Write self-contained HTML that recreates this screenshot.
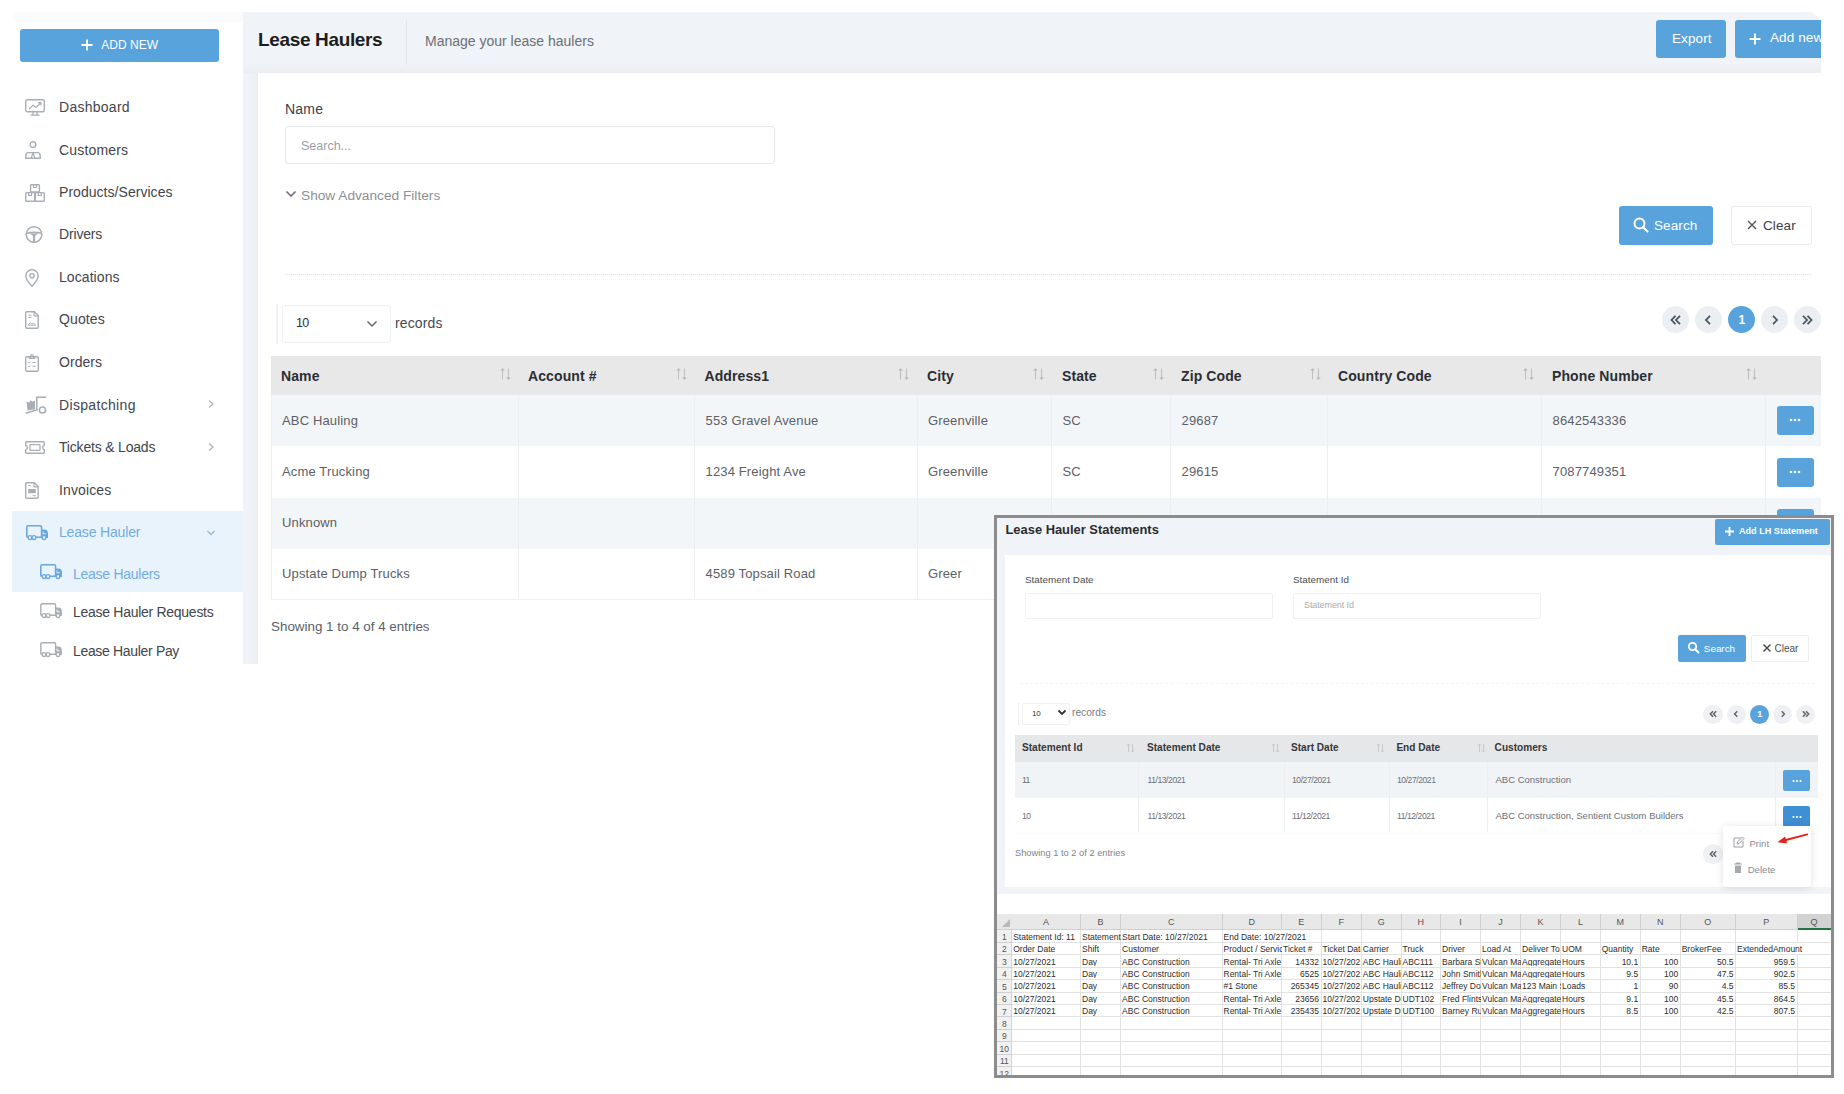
<!DOCTYPE html>
<html><head><meta charset="utf-8"><style>
html,body{margin:0;padding:0;background:#fff;}
body{width:1844px;height:1094px;position:relative;overflow:hidden;font-family:"Liberation Sans", sans-serif;}
.t{position:absolute;white-space:nowrap;}
.r{position:absolute;box-sizing:border-box;}
svg.r{overflow:visible;}
</style></head><body>
<div class="r" style="left:14px;top:12px;width:229px;height:10px;background:#fafbfc;"></div>
<div class="r" style="left:20px;top:29px;width:199px;height:33px;background:#58a3dc;border-radius:3px;"></div>
<svg class="r" style="left:80px;top:37px;" width="14" height="16" viewBox="0 0 14 16"><path d="M7 2.5V13.5M1.5 8H12.5" stroke="#fff" stroke-width="1.8"/></svg>
<div class="t" style="left:101.3px;top:39.04px;font-size:12px;line-height:12px;color:#fff;">ADD NEW</div>
<div class="t" style="left:59px;top:99.95px;font-size:14px;line-height:14px;color:#42454c;letter-spacing:0.27px;">Dashboard</div>
<div class="t" style="left:59px;top:142.55px;font-size:14px;line-height:14px;color:#42454c;letter-spacing:0.18px;">Customers</div>
<div class="t" style="left:59px;top:184.95px;font-size:14px;line-height:14px;color:#42454c;letter-spacing:0.04px;">Products/Services</div>
<div class="t" style="left:59px;top:227.45px;font-size:14px;line-height:14px;color:#42454c;letter-spacing:-0.16px;">Drivers</div>
<div class="t" style="left:59px;top:269.85px;font-size:14px;line-height:14px;color:#42454c;letter-spacing:0.07px;">Locations</div>
<div class="t" style="left:59px;top:312.45px;font-size:14px;line-height:14px;color:#42454c;letter-spacing:0.1px;">Quotes</div>
<div class="t" style="left:59px;top:354.95px;font-size:14px;line-height:14px;color:#42454c;letter-spacing:0.06px;">Orders</div>
<div class="t" style="left:59px;top:397.65px;font-size:14px;line-height:14px;color:#42454c;letter-spacing:0.33px;">Dispatching</div>
<div class="t" style="left:59px;top:439.95px;font-size:14px;line-height:14px;color:#42454c;letter-spacing:-0.19px;">Tickets &amp; Loads</div>
<div class="t" style="left:59px;top:482.55px;font-size:14px;line-height:14px;color:#42454c;letter-spacing:0.12px;">Invoices</div>
<svg class="r" style="left:25px;top:99px;" width="20" height="17" viewBox="0 0 20 17"><rect x="0.7" y="0.7" width="18.6" height="12" rx="1.5" fill="none" stroke="#a7aeb6" stroke-width="1.4"/><path d="M4 10L8 6.3L11 8.5L15.5 4" fill="none" stroke="#a7aeb6" stroke-width="1.2"/><path d="M12.8 3.6H15.9V6.6" fill="none" stroke="#a7aeb6" stroke-width="1.2"/><path d="M8 12.7V15.8M12 12.7V15.8M5.5 16.2H14.5" stroke="#a7aeb6" stroke-width="1.2"/></svg>
<svg class="r" style="left:25px;top:141px;" width="16" height="18" viewBox="0 0 16 18"><circle cx="8" cy="3.6" r="2.9" fill="none" stroke="#a7aeb6" stroke-width="1.4"/><path d="M0.8 17.2V14.6Q0.8 11.6 3.8 11.6H12.2Q15.2 11.6 15.2 14.6V17.2Z" fill="none" stroke="#a7aeb6" stroke-width="1.4"/><path d="M8 11.6L6.2 17.2M8 11.6L9.8 17.2" stroke="#a7aeb6" stroke-width="1.2"/></svg>
<svg class="r" style="left:25px;top:183.5px;" width="20" height="18" viewBox="0 0 20 18"><rect x="5.6" y="0.7" width="8.8" height="7.3" rx="0.8" fill="none" stroke="#a7aeb6" stroke-width="1.4"/><rect x="0.7" y="8.6" width="9" height="8.7" rx="0.8" fill="none" stroke="#a7aeb6" stroke-width="1.4"/><rect x="10.3" y="8.6" width="9" height="8.7" rx="0.8" fill="none" stroke="#a7aeb6" stroke-width="1.4"/><path d="M8.5 0.7V3.5H11.5V0.7M3.6 8.6V11.4H6.6V8.6M13.2 8.6V11.4H16.2V8.6" fill="none" stroke="#a7aeb6" stroke-width="1.1"/></svg>
<svg class="r" style="left:25px;top:226.4px;" width="18" height="17" viewBox="0 0 18 17"><circle cx="9" cy="8.5" r="7.8" fill="none" stroke="#a7aeb6" stroke-width="1.5"/><path d="M1.5 7.2Q9 5.5 16.5 7.2" fill="none" stroke="#a7aeb6" stroke-width="1.6"/><path d="M4.5 7.5L9 10.5L13.5 7.5Z" fill="#a7aeb6"/><path d="M9 9.5V16" stroke="#a7aeb6" stroke-width="2.2"/></svg>
<svg class="r" style="left:25px;top:268.5px;" width="14" height="18" viewBox="0 0 14 18"><path d="M7 17.2Q0.8 10.5 0.8 6.9A6.2 6.2 0 0 1 13.2 6.9Q13.2 10.5 7 17.2Z" fill="none" stroke="#a7aeb6" stroke-width="1.4"/><circle cx="7" cy="6.8" r="2.2" fill="none" stroke="#a7aeb6" stroke-width="1.3"/></svg>
<svg class="r" style="left:25px;top:311px;" width="14" height="18" viewBox="0 0 14 18"><path d="M1.8 0.7H9.3L13.2 4.6V16.2Q13.2 17.3 12.1 17.3H1.8Q0.7 17.3 0.7 16.2V1.8Q0.7 0.7 1.8 0.7Z" fill="none" stroke="#a7aeb6" stroke-width="1.4"/><path d="M9 0.9V4.9H13" fill="none" stroke="#a7aeb6" stroke-width="1.1"/><path d="M3.3 4.2H6.5M3.3 6.5H6.5M3.3 14.2L5.3 11.5L7 13.2L8.5 12L10.6 14.2Z" fill="none" stroke="#a7aeb6" stroke-width="1"/></svg>
<svg class="r" style="left:25px;top:353.5px;" width="14" height="18" viewBox="0 0 14 18"><rect x="0.7" y="2.7" width="12.6" height="14.6" rx="1.3" fill="none" stroke="#a7aeb6" stroke-width="1.4"/><path d="M4.3 4.3V2.6H5.6Q5.6 0.7 7 0.7Q8.4 0.7 8.4 2.6H9.7V4.3Z" fill="none" stroke="#a7aeb6" stroke-width="1.2"/><path d="M3 8.2L4 9.2L5.5 7.5M7.5 8.5H10.8M3 12.3H5.5M7.5 12.3H10.8" fill="none" stroke="#a7aeb6" stroke-width="1"/></svg>
<svg class="r" style="left:25px;top:396px;" width="22" height="18" viewBox="0 0 22 18"><path d="M0.8 17.2L13 13.5" stroke="#a7aeb6" stroke-width="1.5"/><path d="M1.5 5.5L4 6.5L5.5 4.2L7.5 5.5L10 4.8V13.2L2.5 14.5Z" fill="#a7aeb6"/><path d="M11.8 13V1.2H21.3" fill="none" stroke="#a7aeb6" stroke-width="1.5"/><circle cx="17.5" cy="14" r="3.1" fill="#fff" stroke="#a7aeb6" stroke-width="1.5"/></svg>
<svg class="r" style="left:25px;top:441px;" width="20" height="13" viewBox="0 0 20 13"><path d="M1.8 0.7H18.2Q19.3 0.7 19.3 1.8V4.3Q17.6 4.8 17.6 6.5Q17.6 8.2 19.3 8.7V11.2Q19.3 12.3 18.2 12.3H1.8Q0.7 12.3 0.7 11.2V8.7Q2.4 8.2 2.4 6.5Q2.4 4.8 0.7 4.3V1.8Q0.7 0.7 1.8 0.7Z" fill="none" stroke="#a7aeb6" stroke-width="1.4"/><rect x="5" y="3.6" width="10" height="5.8" rx="0.6" fill="none" stroke="#a7aeb6" stroke-width="1.3"/></svg>
<svg class="r" style="left:25px;top:481.5px;" width="14" height="17" viewBox="0 0 14 17"><path d="M1.8 0.7H9.3L13.2 4.6V15.2Q13.2 16.3 12.1 16.3H1.8Q0.7 16.3 0.7 15.2V1.8Q0.7 0.7 1.8 0.7Z" fill="none" stroke="#a7aeb6" stroke-width="1.4"/><path d="M9 0.9V4.9H13" fill="none" stroke="#a7aeb6" stroke-width="1.1"/><rect x="3.2" y="7" width="7.6" height="4.2" fill="#a7aeb6"/><path d="M3.3 3.5H5.8M7.5 13.7H10.8" stroke="#a7aeb6" stroke-width="1"/></svg>
<svg class="r" style="left:207px;top:399px;" width="8" height="10" viewBox="0 0 8 10"><path d="M2 1.5L6 5L2 8.5" fill="none" stroke="#b4b8bc" stroke-width="1.4"/></svg>
<svg class="r" style="left:207px;top:441.6px;" width="8" height="10" viewBox="0 0 8 10"><path d="M2 1.5L6 5L2 8.5" fill="none" stroke="#b4b8bc" stroke-width="1.4"/></svg>
<div class="r" style="left:12px;top:511px;width:231px;height:81px;background:#e9f3fc;"></div>
<svg class="r" style="left:25.5px;top:524.5px;" width="22" height="15" viewBox="0 0 22 15"><path d="M2.2 0.8H14.2Q15.6 0.8 15.6 2.2V12.3H2.2Q0.8 12.3 0.8 10.9V2.2Q0.8 0.8 2.2 0.8Z" fill="none" stroke="#6aa7dc" stroke-width="1.6"/><path d="M15.6 5.2H18.5Q21.2 5.2 21.2 8.8V12.3H15.6" fill="#6aa7dc" stroke="#6aa7dc" stroke-width="1.6"/><circle cx="4" cy="12.6" r="1.9" fill="#e9f3fc" stroke="#6aa7dc" stroke-width="1.3"/><circle cx="8" cy="12.6" r="1.9" fill="#e9f3fc" stroke="#6aa7dc" stroke-width="1.3"/><circle cx="18" cy="12.6" r="1.9" fill="#e9f3fc" stroke="#6aa7dc" stroke-width="1.3"/><path d="M17 6.5V8.8H19.8" fill="none" stroke="#e9f3fc" stroke-width="0.9"/></svg>
<div class="t" style="left:59px;top:525.15px;font-size:14px;line-height:14px;color:#74ace0;letter-spacing:-0.17px;">Lease Hauler</div>
<svg class="r" style="left:206px;top:528.5px;" width="10" height="8" viewBox="0 0 10 8"><path d="M1.5 2L5 5.5L8.5 2" fill="none" stroke="#9cb8d2" stroke-width="1.4"/></svg>
<svg class="r" style="left:39.5px;top:564.2px;" width="22" height="15" viewBox="0 0 22 15"><path d="M2.2 0.8H14.2Q15.6 0.8 15.6 2.2V12.3H2.2Q0.8 12.3 0.8 10.9V2.2Q0.8 0.8 2.2 0.8Z" fill="none" stroke="#6aa7dc" stroke-width="1.6"/><path d="M15.6 5.2H18.5Q21.2 5.2 21.2 8.8V12.3H15.6" fill="#6aa7dc" stroke="#6aa7dc" stroke-width="1.6"/><circle cx="4" cy="12.6" r="1.9" fill="#e9f3fc" stroke="#6aa7dc" stroke-width="1.3"/><circle cx="8" cy="12.6" r="1.9" fill="#e9f3fc" stroke="#6aa7dc" stroke-width="1.3"/><circle cx="18" cy="12.6" r="1.9" fill="#e9f3fc" stroke="#6aa7dc" stroke-width="1.3"/><path d="M17 6.5V8.8H19.8" fill="none" stroke="#e9f3fc" stroke-width="0.9"/></svg>
<div class="t" style="left:73px;top:566.85px;font-size:14px;line-height:14px;color:#74ace0;letter-spacing:-0.27px;">Lease Haulers</div>
<svg class="r" style="left:39.5px;top:603.2px;" width="22" height="15" viewBox="0 0 22 15"><path d="M2.2 0.8H14.2Q15.6 0.8 15.6 2.2V12.3H2.2Q0.8 12.3 0.8 10.9V2.2Q0.8 0.8 2.2 0.8Z" fill="none" stroke="#a7aeb6" stroke-width="1.4"/><path d="M15.6 5.2H18.5Q21.2 5.2 21.2 8.8V12.3H15.6" fill="#a7aeb6" stroke="#a7aeb6" stroke-width="1.4"/><circle cx="4" cy="12.6" r="1.9" fill="#fff" stroke="#a7aeb6" stroke-width="1.3"/><circle cx="8" cy="12.6" r="1.9" fill="#fff" stroke="#a7aeb6" stroke-width="1.3"/><circle cx="18" cy="12.6" r="1.9" fill="#fff" stroke="#a7aeb6" stroke-width="1.3"/><path d="M17 6.5V8.8H19.8" fill="none" stroke="#fff" stroke-width="0.9"/></svg>
<div class="t" style="left:73px;top:605.15px;font-size:14px;line-height:14px;color:#42454c;letter-spacing:-0.28px;">Lease Hauler Requests</div>
<svg class="r" style="left:39.5px;top:642px;" width="22" height="15" viewBox="0 0 22 15"><path d="M2.2 0.8H14.2Q15.6 0.8 15.6 2.2V12.3H2.2Q0.8 12.3 0.8 10.9V2.2Q0.8 0.8 2.2 0.8Z" fill="none" stroke="#a7aeb6" stroke-width="1.4"/><path d="M15.6 5.2H18.5Q21.2 5.2 21.2 8.8V12.3H15.6" fill="#a7aeb6" stroke="#a7aeb6" stroke-width="1.4"/><circle cx="4" cy="12.6" r="1.9" fill="#fff" stroke="#a7aeb6" stroke-width="1.3"/><circle cx="8" cy="12.6" r="1.9" fill="#fff" stroke="#a7aeb6" stroke-width="1.3"/><circle cx="18" cy="12.6" r="1.9" fill="#fff" stroke="#a7aeb6" stroke-width="1.3"/><path d="M17 6.5V8.8H19.8" fill="none" stroke="#fff" stroke-width="0.9"/></svg>
<div class="t" style="left:73px;top:644.15px;font-size:14px;line-height:14px;color:#42454c;letter-spacing:-0.33px;">Lease Hauler Pay</div>
<div class="r" style="left:243px;top:12px;width:1578px;height:652px;background:#f0f3f7;border-top-right-radius:14px;"></div>
<div class="r" style="left:247px;top:73px;width:11px;height:591px;background:linear-gradient(90deg, rgba(233,237,241,0) 0%, rgba(233,237,241,0.8) 100%);"></div>
<div class="r" style="left:243px;top:63px;width:1578px;height:10px;background:linear-gradient(rgba(233,236,240,0), rgba(233,236,240,0.9));"></div>
<div class="r" style="left:258px;top:73px;width:1563px;height:591px;background:#fff;"></div>
<div class="t" style="left:258px;top:29.92px;font-size:19px;line-height:19px;color:#1c1d21;font-weight:700;letter-spacing:-0.35px;">Lease Haulers</div>
<div class="r" style="left:406px;top:20px;width:1px;height:45px;background:#e3e7ec;"></div>
<div class="t" style="left:425px;top:34.35px;font-size:14px;line-height:14px;color:#6b6f76;">Manage your lease haulers</div>
<div class="r" style="left:1656px;top:20px;width:70px;height:38px;background:#58a3dc;border-radius:3px;"></div>
<div class="t" style="left:1672px;top:31.57px;font-size:13.5px;line-height:13.5px;color:#fff;letter-spacing:0.1px;">Export</div>
<div class="r" style="left:1735px;top:20px;width:86px;height:38px;overflow:hidden;"><div style="position:absolute;left:0;top:0;width:100px;height:38px;background:#58a3dc;border-radius:3px;"></div><svg style="position:absolute;left:13px;top:12px" width="14" height="14"><path d="M7 1.5V12.5M1.5 7H12.5" stroke="#fff" stroke-width="1.8"/></svg><div class="t" style="left:35px;top:11.1px;font-size:13.5px;line-height:13.5px;color:#fff;letter-spacing:0.1px;">Add new</div></div>
<div class="t" style="left:285px;top:102.45px;font-size:14px;line-height:14px;color:#3d4048;letter-spacing:0.2px;">Name</div>
<div class="r" style="left:285px;top:126px;width:490px;height:38px;border:1px solid #e6e8eb;border-radius:3px;background:#fff;"></div>
<div class="t" style="left:301px;top:139.72px;font-size:12.5px;line-height:12.5px;color:#9a9ea4;">Search...</div>
<svg class="r" style="left:285px;top:189px;" width="12" height="10" viewBox="0 0 12 10"><path d="M1.5 2.5L6 7L10.5 2.5" fill="none" stroke="#6b6f76" stroke-width="1.6"/></svg>
<div class="t" style="left:301px;top:188.90px;font-size:13.7px;line-height:13.7px;color:#8b9096;">Show Advanced Filters</div>
<div class="r" style="left:1619px;top:206px;width:94px;height:39px;background:#58a3dc;border-radius:3px;"></div>
<svg class="r" style="left:1632px;top:216px;" width="18" height="18" viewBox="0 0 18 18"><circle cx="7.5" cy="7.5" r="5" fill="none" stroke="#fff" stroke-width="2"/><path d="M11 11L15.5 15.5" stroke="#fff" stroke-width="2.2" stroke-linecap="round"/></svg>
<div class="t" style="left:1654px;top:218.57px;font-size:13.5px;line-height:13.5px;color:#fff;letter-spacing:0.1px;">Search</div>
<div class="r" style="left:1731px;top:206px;width:81px;height:39px;border:1px solid #e8eaed;border-radius:3px;background:#fff;"></div>
<svg class="r" style="left:1746px;top:219px;" width="12" height="12" viewBox="0 0 12 12"><path d="M2 2L10 10M10 2L2 10" stroke="#555" stroke-width="1.4"/></svg>
<div class="t" style="left:1763px;top:218.57px;font-size:13.5px;line-height:13.5px;color:#3d4048;letter-spacing:0.1px;">Clear</div>
<div class="r" style="left:285px;top:274px;width:1527px;height:1px;border-top:1px dotted #dfe2e6;"></div>
<div class="r" style="left:275.5px;top:304px;width:2px;height:40px;background:#eef0f2;"></div>
<div class="r" style="left:282px;top:305px;width:109px;height:38px;border:1px solid #f0f1f3;border-radius:3px;"></div>
<div class="t" style="left:296px;top:317.22px;font-size:12.5px;line-height:12.5px;color:#2d3036;letter-spacing:-0.6px;">10</div>
<svg class="r" style="left:366px;top:319.5px;" width="12" height="8" viewBox="0 0 12 8"><path d="M1.5 1.5L6 6L10.5 1.5" fill="none" stroke="#666a70" stroke-width="1.5"/></svg>
<div class="t" style="left:395px;top:315.95px;font-size:14px;line-height:14px;color:#464a50;letter-spacing:0.12px;">records</div>
<div class="r" style="left:1661.5px;top:306.4px;width:27px;height:27px;background:#ebeef2;border-radius:50%;"></div>
<div class="r" style="left:1694.7px;top:306.4px;width:27px;height:27px;background:#ebeef2;border-radius:50%;"></div>
<div class="r" style="left:1728.4px;top:306.4px;width:27px;height:27px;background:#58a3dc;border-radius:50%;"></div>
<div class="r" style="left:1761.3px;top:306.4px;width:27px;height:27px;background:#ebeef2;border-radius:50%;"></div>
<div class="r" style="left:1794.2px;top:306.4px;width:27px;height:27px;background:#ebeef2;border-radius:50%;"></div>
<svg class="r" style="left:1661px;top:306px;" width="28" height="28" viewBox="0 0 28 28"><path d="M14.5 9.8L10.5 14L14.5 18.2M19 9.8L15 14L19 18.2" fill="none" stroke="#50545a" stroke-width="1.8"/></svg>
<svg class="r" style="left:1694.2px;top:306px;" width="28" height="28" viewBox="0 0 28 28"><path d="M16 9.8L12 14L16 18.2" fill="none" stroke="#50545a" stroke-width="1.8"/></svg>
<div class="t" style="left:1738.5px;top:314.34px;font-size:12px;line-height:12px;color:#fff;font-weight:700;">1</div>
<svg class="r" style="left:1760.8px;top:306px;" width="28" height="28" viewBox="0 0 28 28"><path d="M12 9.8L16 14L12 18.2" fill="none" stroke="#50545a" stroke-width="1.8"/></svg>
<svg class="r" style="left:1793.7px;top:306px;" width="28" height="28" viewBox="0 0 28 28"><path d="M9 9.8L13 14L9 18.2M13.5 9.8L17.5 14L13.5 18.2" fill="none" stroke="#50545a" stroke-width="1.8"/></svg>
<div class="r" style="left:1821px;top:290px;width:23px;height:60px;background:#fff;"></div>
<div class="r" style="left:271px;top:356px;width:1550px;height:39px;background:#e8e8e9;"></div>
<div class="t" style="left:281px;top:368.85px;font-size:14px;line-height:14px;color:#2b2e33;font-weight:700;letter-spacing:0.1px;">Name</div>
<svg class="r" style="left:499px;top:367px;" width="13" height="14" viewBox="0 0 13 14"><path d="M3.5 12.5V3M9.5 1.5V11" fill="none" stroke="#bfc2c5" stroke-width="1.1"/><path d="M1.2 3.6L3.5 1.2L5.8 3.6Z M7.2 10.4L9.5 12.8L11.8 10.4Z" fill="#b3b6b9"/></svg>
<div class="t" style="left:528px;top:368.85px;font-size:14px;line-height:14px;color:#2b2e33;font-weight:700;letter-spacing:0.1px;">Account #</div>
<svg class="r" style="left:675px;top:367px;" width="13" height="14" viewBox="0 0 13 14"><path d="M3.5 12.5V3M9.5 1.5V11" fill="none" stroke="#bfc2c5" stroke-width="1.1"/><path d="M1.2 3.6L3.5 1.2L5.8 3.6Z M7.2 10.4L9.5 12.8L11.8 10.4Z" fill="#b3b6b9"/></svg>
<div class="t" style="left:704.5px;top:368.85px;font-size:14px;line-height:14px;color:#2b2e33;font-weight:700;letter-spacing:0.1px;">Address1</div>
<svg class="r" style="left:897px;top:367px;" width="13" height="14" viewBox="0 0 13 14"><path d="M3.5 12.5V3M9.5 1.5V11" fill="none" stroke="#bfc2c5" stroke-width="1.1"/><path d="M1.2 3.6L3.5 1.2L5.8 3.6Z M7.2 10.4L9.5 12.8L11.8 10.4Z" fill="#b3b6b9"/></svg>
<div class="t" style="left:927px;top:368.85px;font-size:14px;line-height:14px;color:#2b2e33;font-weight:700;letter-spacing:0.1px;">City</div>
<svg class="r" style="left:1032px;top:367px;" width="13" height="14" viewBox="0 0 13 14"><path d="M3.5 12.5V3M9.5 1.5V11" fill="none" stroke="#bfc2c5" stroke-width="1.1"/><path d="M1.2 3.6L3.5 1.2L5.8 3.6Z M7.2 10.4L9.5 12.8L11.8 10.4Z" fill="#b3b6b9"/></svg>
<div class="t" style="left:1062px;top:368.85px;font-size:14px;line-height:14px;color:#2b2e33;font-weight:700;letter-spacing:0.1px;">State</div>
<svg class="r" style="left:1152px;top:367px;" width="13" height="14" viewBox="0 0 13 14"><path d="M3.5 12.5V3M9.5 1.5V11" fill="none" stroke="#bfc2c5" stroke-width="1.1"/><path d="M1.2 3.6L3.5 1.2L5.8 3.6Z M7.2 10.4L9.5 12.8L11.8 10.4Z" fill="#b3b6b9"/></svg>
<div class="t" style="left:1181px;top:368.85px;font-size:14px;line-height:14px;color:#2b2e33;font-weight:700;letter-spacing:0.1px;">Zip Code</div>
<svg class="r" style="left:1309px;top:367px;" width="13" height="14" viewBox="0 0 13 14"><path d="M3.5 12.5V3M9.5 1.5V11" fill="none" stroke="#bfc2c5" stroke-width="1.1"/><path d="M1.2 3.6L3.5 1.2L5.8 3.6Z M7.2 10.4L9.5 12.8L11.8 10.4Z" fill="#b3b6b9"/></svg>
<div class="t" style="left:1338px;top:368.85px;font-size:14px;line-height:14px;color:#2b2e33;font-weight:700;letter-spacing:0.1px;">Country Code</div>
<svg class="r" style="left:1522px;top:367px;" width="13" height="14" viewBox="0 0 13 14"><path d="M3.5 12.5V3M9.5 1.5V11" fill="none" stroke="#bfc2c5" stroke-width="1.1"/><path d="M1.2 3.6L3.5 1.2L5.8 3.6Z M7.2 10.4L9.5 12.8L11.8 10.4Z" fill="#b3b6b9"/></svg>
<div class="t" style="left:1552px;top:368.85px;font-size:14px;line-height:14px;color:#2b2e33;font-weight:700;letter-spacing:0.1px;">Phone Number</div>
<svg class="r" style="left:1745px;top:367px;" width="13" height="14" viewBox="0 0 13 14"><path d="M3.5 12.5V3M9.5 1.5V11" fill="none" stroke="#bfc2c5" stroke-width="1.1"/><path d="M1.2 3.6L3.5 1.2L5.8 3.6Z M7.2 10.4L9.5 12.8L11.8 10.4Z" fill="#b3b6b9"/></svg>
<div class="r" style="left:271px;top:395px;width:1550px;height:51.39999999999998px;background:#f3f6f9;"></div>
<div class="r" style="left:271px;top:446.4px;width:1550px;height:51.10000000000002px;background:#fff;"></div>
<div class="r" style="left:271px;top:497.5px;width:1550px;height:51.200000000000045px;background:#f3f6f9;"></div>
<div class="r" style="left:271px;top:548.7px;width:1550px;height:50.299999999999955px;background:#fff;"></div>
<div class="r" style="left:271px;top:599px;width:1550px;height:1px;background:#eef0f2;"></div>
<div class="r" style="left:271px;top:395px;width:1px;height:205px;background:#eef0f2;"></div>
<div class="r" style="left:518px;top:395px;width:1px;height:204px;background:#eceef1;"></div>
<div class="r" style="left:694px;top:395px;width:1px;height:204px;background:#eceef1;"></div>
<div class="r" style="left:917px;top:395px;width:1px;height:204px;background:#eceef1;"></div>
<div class="r" style="left:1051px;top:395px;width:1px;height:204px;background:#eceef1;"></div>
<div class="r" style="left:1170px;top:395px;width:1px;height:204px;background:#eceef1;"></div>
<div class="r" style="left:1327px;top:395px;width:1px;height:204px;background:#eceef1;"></div>
<div class="r" style="left:1541px;top:395px;width:1px;height:204px;background:#eceef1;"></div>
<div class="r" style="left:1765px;top:395px;width:1px;height:204px;background:#eceef1;"></div>
<div class="t" style="left:282px;top:414.10px;font-size:13px;line-height:13px;color:#5c6066;letter-spacing:0.15px;">ABC Hauling</div>
<div class="t" style="left:705.5px;top:414.10px;font-size:13px;line-height:13px;color:#5c6066;letter-spacing:0.15px;">553 Gravel Avenue</div>
<div class="t" style="left:928px;top:414.10px;font-size:13px;line-height:13px;color:#5c6066;letter-spacing:0.15px;">Greenville</div>
<div class="t" style="left:1062.5px;top:414.10px;font-size:13px;line-height:13px;color:#5c6066;letter-spacing:0.15px;">SC</div>
<div class="t" style="left:1181.5px;top:414.10px;font-size:13px;line-height:13px;color:#5c6066;letter-spacing:0.15px;">29687</div>
<div class="t" style="left:1552.5px;top:414.10px;font-size:13px;line-height:13px;color:#5c6066;letter-spacing:0.15px;">8642543336</div>
<div class="t" style="left:282px;top:465.10px;font-size:13px;line-height:13px;color:#5c6066;letter-spacing:0.15px;">Acme Trucking</div>
<div class="t" style="left:705.5px;top:465.10px;font-size:13px;line-height:13px;color:#5c6066;letter-spacing:0.15px;">1234 Freight Ave</div>
<div class="t" style="left:928px;top:465.10px;font-size:13px;line-height:13px;color:#5c6066;letter-spacing:0.15px;">Greenville</div>
<div class="t" style="left:1062.5px;top:465.10px;font-size:13px;line-height:13px;color:#5c6066;letter-spacing:0.15px;">SC</div>
<div class="t" style="left:1181.5px;top:465.10px;font-size:13px;line-height:13px;color:#5c6066;letter-spacing:0.15px;">29615</div>
<div class="t" style="left:1552.5px;top:465.10px;font-size:13px;line-height:13px;color:#5c6066;letter-spacing:0.15px;">7087749351</div>
<div class="t" style="left:282px;top:516.10px;font-size:13px;line-height:13px;color:#5c6066;letter-spacing:0.15px;">Unknown</div>
<div class="t" style="left:282px;top:566.70px;font-size:13px;line-height:13px;color:#5c6066;letter-spacing:0.15px;">Upstate Dump Trucks</div>
<div class="t" style="left:705.5px;top:566.70px;font-size:13px;line-height:13px;color:#5c6066;letter-spacing:0.15px;">4589 Topsail Road</div>
<div class="t" style="left:928px;top:566.70px;font-size:13px;line-height:13px;color:#5c6066;letter-spacing:0.15px;">Greer</div>
<div class="r" style="left:1777px;top:406px;width:37px;height:29px;background:#58a3dc;border-radius:3px;"></div>
<svg class="r" style="left:1787px;top:417px;" width="16" height="6" viewBox="0 0 16 6"><circle cx="4" cy="3" r="1.3" fill="#fff"/><circle cx="8" cy="3" r="1.3" fill="#fff"/><circle cx="12" cy="3" r="1.3" fill="#fff"/></svg>
<div class="r" style="left:1777px;top:457.5px;width:37px;height:29px;background:#58a3dc;border-radius:3px;"></div>
<svg class="r" style="left:1787px;top:468.5px;" width="16" height="6" viewBox="0 0 16 6"><circle cx="4" cy="3" r="1.3" fill="#fff"/><circle cx="8" cy="3" r="1.3" fill="#fff"/><circle cx="12" cy="3" r="1.3" fill="#fff"/></svg>
<div class="r" style="left:1777px;top:508.5px;width:37px;height:29px;background:#58a3dc;border-radius:3px;"></div>
<svg class="r" style="left:1787px;top:519.5px;" width="16" height="6" viewBox="0 0 16 6"><circle cx="4" cy="3" r="1.3" fill="#fff"/><circle cx="8" cy="3" r="1.3" fill="#fff"/><circle cx="12" cy="3" r="1.3" fill="#fff"/></svg>
<div class="t" style="left:271px;top:619.66px;font-size:13.4px;line-height:13.4px;color:#5b5f66;">Showing 1 to 4 of 4 entries</div>
<div class="r" style="left:994px;top:515px;width:840px;height:563px;background:#fff;"></div>
<div class="r" style="left:997px;top:518px;width:834px;height:375.5px;background:#f0f3f7;"></div>
<div class="r" style="left:1005px;top:555.3px;width:826px;height:331.7px;background:#fff;"></div>
<div class="t" style="left:1005.5px;top:523.88px;font-size:12.9px;line-height:12.9px;color:#2a2c30;font-weight:700;">Lease Hauler Statements</div>
<div class="r" style="left:1714.5px;top:519px;width:115px;height:26px;background:#58a3dc;border-radius:2px;"></div>
<svg class="r" style="left:1724px;top:526px;" width="11" height="11" viewBox="0 0 11 11"><path d="M5.5 1V10M1 5.5H10" stroke="#fff" stroke-width="1.8"/></svg>
<div class="t" style="left:1739px;top:527.30px;font-size:9.1px;line-height:9.1px;color:#fff;font-weight:700;">Add LH Statement</div>
<div class="t" style="left:1025px;top:575.12px;font-size:9.9px;line-height:9.9px;color:#4a4d52;">Statement Date</div>
<div class="t" style="left:1293px;top:575.12px;font-size:9.9px;line-height:9.9px;color:#4a4d52;">Statement Id</div>
<div class="r" style="left:1024.5px;top:592.5px;width:248px;height:26px;border:1px solid #f0f1f3;border-radius:2px;"></div>
<div class="r" style="left:1293px;top:592.5px;width:248px;height:26px;border:1px solid #f0f1f3;border-radius:2px;"></div>
<div class="t" style="left:1304px;top:601.38px;font-size:9px;line-height:9px;color:#a9acb0;letter-spacing:-0.1px;">Statement Id</div>
<div class="r" style="left:1677.5px;top:635px;width:68.5px;height:26.5px;background:#58a3dc;border-radius:2px;"></div>
<svg class="r" style="left:1687px;top:641px;" width="14" height="14" viewBox="0 0 14 14"><circle cx="5.5" cy="5.5" r="3.7" fill="none" stroke="#fff" stroke-width="1.8"/><path d="M8.2 8.2L11.5 11.5" stroke="#fff" stroke-width="2" stroke-linecap="round"/></svg>
<div class="t" style="left:1703.8px;top:643.62px;font-size:9.9px;line-height:9.9px;color:#fff;">Search</div>
<div class="r" style="left:1751.3px;top:635px;width:58px;height:26.5px;border:1px solid #eceef0;border-radius:2px;"></div>
<svg class="r" style="left:1762px;top:643px;" width="10" height="10" viewBox="0 0 10 10"><path d="M1.5 1.5L8.5 8.5M8.5 1.5L1.5 8.5" stroke="#444" stroke-width="1.4"/></svg>
<div class="t" style="left:1774.5px;top:643.54px;font-size:10px;line-height:10px;color:#4a4d52;">Clear</div>
<div class="r" style="left:1020px;top:683px;width:795px;height:1px;border-top:1px dashed #f3f4f6;"></div>
<div class="r" style="left:1018px;top:702.5px;width:1px;height:22px;background:#eceef0;"></div>
<div class="r" style="left:1022px;top:702.5px;width:48px;height:22px;border:1px solid #f0f1f3;border-radius:2px;"></div>
<div class="t" style="left:1032px;top:709.73px;font-size:8px;line-height:8px;color:#333;letter-spacing:-0.2px;">10</div>
<svg class="r" style="left:1057px;top:709px;" width="10" height="8" viewBox="0 0 10 8"><path d="M1.5 1.5L5 5L8.5 1.5" fill="none" stroke="#333" stroke-width="1.8"/></svg>
<div class="t" style="left:1072px;top:707.87px;font-size:10.2px;line-height:10.2px;color:#7a7e84;">records</div>
<div class="r" style="left:1703.3px;top:704.6px;width:19.4px;height:19.4px;background:#eef0f3;border-radius:50%;"></div>
<div class="r" style="left:1726.6px;top:704.6px;width:19.4px;height:19.4px;background:#eef0f3;border-radius:50%;"></div>
<div class="r" style="left:1749.8px;top:704.6px;width:19.4px;height:19.4px;background:#58a3dc;border-radius:50%;"></div>
<div class="r" style="left:1773.0px;top:704.6px;width:19.4px;height:19.4px;background:#eef0f3;border-radius:50%;"></div>
<div class="r" style="left:1796.1px;top:704.6px;width:19.4px;height:19.4px;background:#eef0f3;border-radius:50%;"></div>
<svg class="r" style="left:1703px;top:704.3px;" width="20" height="20" viewBox="0 0 20 20"><path d="M10 7.3L7.3 10L10 12.7M13.2 7.3L10.5 10L13.2 12.7" fill="none" stroke="#62666c" stroke-width="1.5"/></svg>
<svg class="r" style="left:1726.3px;top:704.3px;" width="20" height="20" viewBox="0 0 20 20"><path d="M11.3 7.3L8.6 10L11.3 12.7" fill="none" stroke="#62666c" stroke-width="1.5"/></svg>
<div class="t" style="left:1757.2px;top:710.18px;font-size:9px;line-height:9px;color:#fff;font-weight:700;">1</div>
<svg class="r" style="left:1772.7px;top:704.3px;" width="20" height="20" viewBox="0 0 20 20"><path d="M8.7 7.3L11.4 10L8.7 12.7" fill="none" stroke="#62666c" stroke-width="1.5"/></svg>
<svg class="r" style="left:1795.8px;top:704.3px;" width="20" height="20" viewBox="0 0 20 20"><path d="M6.8 7.3L9.5 10L6.8 12.7M10 7.3L12.7 10L10 12.7" fill="none" stroke="#62666c" stroke-width="1.5"/></svg>
<div class="r" style="left:1015px;top:735.4px;width:803px;height:27px;background:#e6e7e8;"></div>
<div class="t" style="left:1022px;top:743.15px;font-size:10.1px;line-height:10.1px;color:#35383d;font-weight:700;">Statement Id</div>
<svg class="r" style="left:1126px;top:743px;" width="9" height="10" viewBox="0 0 9 10"><path d="M2.5 9V1M0.8 2.7L2.5 1L4.2 2.7M6.5 1V9M4.8 7.3L6.5 9L8.2 7.3" fill="none" stroke="#c3c6ca" stroke-width="0.9"/></svg>
<div class="t" style="left:1147px;top:743.15px;font-size:10.1px;line-height:10.1px;color:#35383d;font-weight:700;">Statement Date</div>
<svg class="r" style="left:1271px;top:743px;" width="9" height="10" viewBox="0 0 9 10"><path d="M2.5 9V1M0.8 2.7L2.5 1L4.2 2.7M6.5 1V9M4.8 7.3L6.5 9L8.2 7.3" fill="none" stroke="#c3c6ca" stroke-width="0.9"/></svg>
<div class="t" style="left:1291px;top:743.15px;font-size:10.1px;line-height:10.1px;color:#35383d;font-weight:700;">Start Date</div>
<svg class="r" style="left:1376px;top:743px;" width="9" height="10" viewBox="0 0 9 10"><path d="M2.5 9V1M0.8 2.7L2.5 1L4.2 2.7M6.5 1V9M4.8 7.3L6.5 9L8.2 7.3" fill="none" stroke="#c3c6ca" stroke-width="0.9"/></svg>
<div class="t" style="left:1396.4px;top:743.15px;font-size:10.1px;line-height:10.1px;color:#35383d;font-weight:700;">End Date</div>
<svg class="r" style="left:1477px;top:743px;" width="9" height="10" viewBox="0 0 9 10"><path d="M2.5 9V1M0.8 2.7L2.5 1L4.2 2.7M6.5 1V9M4.8 7.3L6.5 9L8.2 7.3" fill="none" stroke="#c3c6ca" stroke-width="0.9"/></svg>
<div class="t" style="left:1494.6px;top:743.15px;font-size:10.1px;line-height:10.1px;color:#35383d;font-weight:700;">Customers</div>
<div class="r" style="left:1015px;top:762.4px;width:803px;height:35.6px;background:#f1f4f7;"></div>
<div class="r" style="left:1015px;top:832.6px;width:803px;height:1px;background:#f7f8f9;"></div>
<div class="r" style="left:1138px;top:762.4px;width:1px;height:70px;background:#eceef0;"></div>
<div class="r" style="left:1284px;top:762.4px;width:1px;height:70px;background:#eceef0;"></div>
<div class="r" style="left:1389.3px;top:762.4px;width:1px;height:70px;background:#eceef0;"></div>
<div class="r" style="left:1487.4px;top:762.4px;width:1px;height:70px;background:#eceef0;"></div>
<div class="r" style="left:1774.5px;top:762.4px;width:1px;height:70px;background:#eceef0;"></div>
<div class="t" style="left:1022px;top:776.22px;font-size:8.6px;line-height:8.6px;color:#6c7076;letter-spacing:-0.6px;">11</div>
<div class="t" style="left:1147.5px;top:776.22px;font-size:8.6px;line-height:8.6px;color:#6c7076;letter-spacing:-0.45px;">11/13/2021</div>
<div class="t" style="left:1292px;top:776.22px;font-size:8.6px;line-height:8.6px;color:#6c7076;letter-spacing:-0.45px;">10/27/2021</div>
<div class="t" style="left:1397px;top:776.22px;font-size:8.6px;line-height:8.6px;color:#6c7076;letter-spacing:-0.45px;">10/27/2021</div>
<div class="t" style="left:1495.5px;top:775.46px;font-size:9.5px;line-height:9.5px;color:#6c7076;">ABC Construction</div>
<div class="t" style="left:1022px;top:812.12px;font-size:8.6px;line-height:8.6px;color:#6c7076;letter-spacing:-0.6px;">10</div>
<div class="t" style="left:1147.5px;top:812.12px;font-size:8.6px;line-height:8.6px;color:#6c7076;letter-spacing:-0.45px;">11/13/2021</div>
<div class="t" style="left:1292px;top:812.12px;font-size:8.6px;line-height:8.6px;color:#6c7076;letter-spacing:-0.45px;">11/12/2021</div>
<div class="t" style="left:1397px;top:812.12px;font-size:8.6px;line-height:8.6px;color:#6c7076;letter-spacing:-0.45px;">11/12/2021</div>
<div class="t" style="left:1495.5px;top:811.36px;font-size:9.5px;line-height:9.5px;color:#6c7076;">ABC Construction, Sentient Custom Builders</div>
<div class="r" style="left:1783.4px;top:770.3px;width:26.6px;height:21px;background:#58a3dc;border-radius:2px;"></div>
<svg class="r" style="left:1790px;top:778.8px;" width="14" height="4" viewBox="0 0 14 4"><circle cx="3.5" cy="2" r="1.1" fill="#fff"/><circle cx="7" cy="2" r="1.1" fill="#fff"/><circle cx="10.5" cy="2" r="1.1" fill="#fff"/></svg>
<div class="r" style="left:1783.4px;top:806px;width:26.6px;height:21px;background:#3f8fd4;border-radius:2px;"></div>
<svg class="r" style="left:1790px;top:814.5px;" width="14" height="4" viewBox="0 0 14 4"><circle cx="3.5" cy="2" r="1.1" fill="#fff"/><circle cx="7" cy="2" r="1.1" fill="#fff"/><circle cx="10.5" cy="2" r="1.1" fill="#fff"/></svg>
<div class="t" style="left:1015px;top:848.63px;font-size:9.3px;line-height:9.3px;color:#80848a;">Showing 1 to 2 of 2 entries</div>
<div class="r" style="left:1703.3px;top:844.3px;width:19.4px;height:19.4px;background:#eef0f3;border-radius:50%;"></div>
<svg class="r" style="left:1703px;top:844px;" width="20" height="20" viewBox="0 0 20 20"><path d="M10 7.3L7.3 10L10 12.7M13.2 7.3L10.5 10L13.2 12.7" fill="none" stroke="#62666c" stroke-width="1.5"/></svg>
<div class="r" style="left:1722.7px;top:825.6px;width:88px;height:61.5px;background:#fff;border-radius:3px;box-shadow:0 1px 8px rgba(0,0,0,0.12);"></div>
<svg class="r" style="left:1732px;top:836px;" width="13" height="13" viewBox="0 0 13 13"><path d="M9 2H2V11H11V5" fill="none" stroke="#9a9ea4" stroke-width="1"/><path d="M5 8L5.5 6L10.5 1L12 2.5L7 7.5Z" fill="none" stroke="#9a9ea4" stroke-width="1"/></svg>
<div class="t" style="left:1749.5px;top:838.96px;font-size:9.5px;line-height:9.5px;color:#8a8e94;">Print</div>
<svg class="r" style="left:1733px;top:862px;" width="10" height="12" viewBox="0 0 10 12"><path d="M1 2H9M3.5 2V1H6.5V2" stroke="#a6a9ad" stroke-width="1.2" fill="none"/><path d="M2 3.5H8V11H2Z" fill="#a6a9ad"/></svg>
<div class="t" style="left:1747.7px;top:864.57px;font-size:9.6px;line-height:9.6px;color:#8a8e94;">Delete</div>
<svg class="r" style="left:1775px;top:830px;" width="35" height="16" viewBox="0 0 35 16"><path d="M32.2 4.4L9 10.5" stroke="#e2231a" stroke-width="2" stroke-linecap="round"/><path d="M2.4 12.3L10.2 6.6L12 13.4Z" fill="#e2231a"/></svg>
<div style="position:absolute;left:0;top:0;width:1831px;height:1075px;overflow:hidden;">
<div class="r" style="left:997px;top:914.2px;width:834px;height:15.599999999999909px;background:#e8e8e8;border-bottom:1px solid #cfcfcf;"></div>
<div class="r" style="left:997px;top:929.8px;width:14.7px;height:145.20000000000005px;background:#f1f1f1;border-right:1px solid #d4d4d4;"></div>
<div class="r" style="left:1797.1px;top:914.2px;width:33.90000000000009px;height:15.599999999999909px;background:#d2d2d2;border-bottom:2px solid #217346;"></div>
<svg class="r" style="left:1001px;top:917px;" width="10" height="11" viewBox="0 0 10 11"><path d="M9 2V10H1Z" fill="#b8b8b8"/></svg>
<div class="r" style="left:1080.0px;top:914.2px;width:1px;height:15.599999999999909px;background:#d0d0d0;"></div>
<div class="t" style="left:1011.7px;top:917.2px;width:68.79999999999995px;text-align:center;font-size:9px;line-height:10px;color:#555;">A</div>
<div class="r" style="left:1080.0px;top:929.8px;width:1px;height:145.20000000000005px;background:#e2e2e2;"></div>
<div class="r" style="left:1120.1px;top:914.2px;width:1px;height:15.599999999999909px;background:#d0d0d0;"></div>
<div class="t" style="left:1080.5px;top:917.2px;width:40.09999999999991px;text-align:center;font-size:9px;line-height:10px;color:#555;">B</div>
<div class="r" style="left:1120.1px;top:929.8px;width:1px;height:145.20000000000005px;background:#e2e2e2;"></div>
<div class="r" style="left:1221.5px;top:914.2px;width:1px;height:15.599999999999909px;background:#d0d0d0;"></div>
<div class="t" style="left:1120.6px;top:917.2px;width:101.40000000000009px;text-align:center;font-size:9px;line-height:10px;color:#555;">C</div>
<div class="r" style="left:1221.5px;top:929.8px;width:1px;height:145.20000000000005px;background:#e2e2e2;"></div>
<div class="r" style="left:1281.0px;top:914.2px;width:1px;height:15.599999999999909px;background:#d0d0d0;"></div>
<div class="t" style="left:1222px;top:917.2px;width:59.5px;text-align:center;font-size:9px;line-height:10px;color:#555;">D</div>
<div class="r" style="left:1281.0px;top:929.8px;width:1px;height:145.20000000000005px;background:#e2e2e2;"></div>
<div class="r" style="left:1320.5px;top:914.2px;width:1px;height:15.599999999999909px;background:#d0d0d0;"></div>
<div class="t" style="left:1281.5px;top:917.2px;width:39.5px;text-align:center;font-size:9px;line-height:10px;color:#555;">E</div>
<div class="r" style="left:1320.5px;top:929.8px;width:1px;height:145.20000000000005px;background:#e2e2e2;"></div>
<div class="r" style="left:1360.8px;top:914.2px;width:1px;height:15.599999999999909px;background:#d0d0d0;"></div>
<div class="t" style="left:1321px;top:917.2px;width:40.299999999999955px;text-align:center;font-size:9px;line-height:10px;color:#555;">F</div>
<div class="r" style="left:1360.8px;top:929.8px;width:1px;height:145.20000000000005px;background:#e2e2e2;"></div>
<div class="r" style="left:1400.5px;top:914.2px;width:1px;height:15.599999999999909px;background:#d0d0d0;"></div>
<div class="t" style="left:1361.3px;top:917.2px;width:39.700000000000045px;text-align:center;font-size:9px;line-height:10px;color:#555;">G</div>
<div class="r" style="left:1400.5px;top:929.8px;width:1px;height:145.20000000000005px;background:#e2e2e2;"></div>
<div class="r" style="left:1440.1px;top:914.2px;width:1px;height:15.599999999999909px;background:#d0d0d0;"></div>
<div class="t" style="left:1401px;top:917.2px;width:39.59999999999991px;text-align:center;font-size:9px;line-height:10px;color:#555;">H</div>
<div class="r" style="left:1440.1px;top:929.8px;width:1px;height:145.20000000000005px;background:#e2e2e2;"></div>
<div class="r" style="left:1480.1px;top:914.2px;width:1px;height:15.599999999999909px;background:#d0d0d0;"></div>
<div class="t" style="left:1440.6px;top:917.2px;width:40.0px;text-align:center;font-size:9px;line-height:10px;color:#555;">I</div>
<div class="r" style="left:1480.1px;top:929.8px;width:1px;height:145.20000000000005px;background:#e2e2e2;"></div>
<div class="r" style="left:1520.1px;top:914.2px;width:1px;height:15.599999999999909px;background:#d0d0d0;"></div>
<div class="t" style="left:1480.6px;top:917.2px;width:40.0px;text-align:center;font-size:9px;line-height:10px;color:#555;">J</div>
<div class="r" style="left:1520.1px;top:929.8px;width:1px;height:145.20000000000005px;background:#e2e2e2;"></div>
<div class="r" style="left:1560.1px;top:914.2px;width:1px;height:15.599999999999909px;background:#d0d0d0;"></div>
<div class="t" style="left:1520.6px;top:917.2px;width:40.0px;text-align:center;font-size:9px;line-height:10px;color:#555;">K</div>
<div class="r" style="left:1560.1px;top:929.8px;width:1px;height:145.20000000000005px;background:#e2e2e2;"></div>
<div class="r" style="left:1599.7px;top:914.2px;width:1px;height:15.599999999999909px;background:#d0d0d0;"></div>
<div class="t" style="left:1560.6px;top:917.2px;width:39.600000000000136px;text-align:center;font-size:9px;line-height:10px;color:#555;">L</div>
<div class="r" style="left:1599.7px;top:929.8px;width:1px;height:145.20000000000005px;background:#e2e2e2;"></div>
<div class="r" style="left:1639.7px;top:914.2px;width:1px;height:15.599999999999909px;background:#d0d0d0;"></div>
<div class="t" style="left:1600.2px;top:917.2px;width:40.0px;text-align:center;font-size:9px;line-height:10px;color:#555;">M</div>
<div class="r" style="left:1639.7px;top:929.8px;width:1px;height:145.20000000000005px;background:#e2e2e2;"></div>
<div class="r" style="left:1679.7px;top:914.2px;width:1px;height:15.599999999999909px;background:#d0d0d0;"></div>
<div class="t" style="left:1640.2px;top:917.2px;width:40.0px;text-align:center;font-size:9px;line-height:10px;color:#555;">N</div>
<div class="r" style="left:1679.7px;top:929.8px;width:1px;height:145.20000000000005px;background:#e2e2e2;"></div>
<div class="r" style="left:1735.0px;top:914.2px;width:1px;height:15.599999999999909px;background:#d0d0d0;"></div>
<div class="t" style="left:1680.2px;top:917.2px;width:55.299999999999955px;text-align:center;font-size:9px;line-height:10px;color:#555;">O</div>
<div class="r" style="left:1735.0px;top:929.8px;width:1px;height:145.20000000000005px;background:#e2e2e2;"></div>
<div class="r" style="left:1796.6px;top:914.2px;width:1px;height:15.599999999999909px;background:#d0d0d0;"></div>
<div class="t" style="left:1735.5px;top:917.2px;width:61.59999999999991px;text-align:center;font-size:9px;line-height:10px;color:#555;">P</div>
<div class="r" style="left:1796.6px;top:929.8px;width:1px;height:145.20000000000005px;background:#e2e2e2;"></div>
<div class="r" style="left:1830.5px;top:914.2px;width:1px;height:15.599999999999909px;background:#d0d0d0;"></div>
<div class="t" style="left:1797.1px;top:917.2px;width:33.90000000000009px;text-align:center;font-size:9px;line-height:10px;color:#555;">Q</div>
<div class="r" style="left:1830.5px;top:929.8px;width:1px;height:145.20000000000005px;background:#e2e2e2;"></div>
<div class="r" style="left:1011.7px;top:941.75px;width:819.3px;height:1px;background:#e2e2e2;"></div>
<div class="r" style="left:997px;top:941.75px;width:14.7px;height:1px;background:#d0d0d0;"></div>
<div class="t" style="left:997px;top:931.8px;width:14.7px;text-align:center;font-size:8.5px;line-height:10px;color:#555;">1</div>
<div class="r" style="left:1011.7px;top:954.2px;width:819.3px;height:1px;background:#e2e2e2;"></div>
<div class="r" style="left:997px;top:954.2px;width:14.7px;height:1px;background:#d0d0d0;"></div>
<div class="t" style="left:997px;top:944.25px;width:14.7px;text-align:center;font-size:8.5px;line-height:10px;color:#555;">2</div>
<div class="r" style="left:1011.7px;top:966.65px;width:819.3px;height:1px;background:#e2e2e2;"></div>
<div class="r" style="left:997px;top:966.65px;width:14.7px;height:1px;background:#d0d0d0;"></div>
<div class="t" style="left:997px;top:956.6999999999999px;width:14.7px;text-align:center;font-size:8.5px;line-height:10px;color:#555;">3</div>
<div class="r" style="left:1011.7px;top:979.1px;width:819.3px;height:1px;background:#e2e2e2;"></div>
<div class="r" style="left:997px;top:979.1px;width:14.7px;height:1px;background:#d0d0d0;"></div>
<div class="t" style="left:997px;top:969.15px;width:14.7px;text-align:center;font-size:8.5px;line-height:10px;color:#555;">4</div>
<div class="r" style="left:1011.7px;top:991.55px;width:819.3px;height:1px;background:#e2e2e2;"></div>
<div class="r" style="left:997px;top:991.55px;width:14.7px;height:1px;background:#d0d0d0;"></div>
<div class="t" style="left:997px;top:981.5999999999999px;width:14.7px;text-align:center;font-size:8.5px;line-height:10px;color:#555;">5</div>
<div class="r" style="left:1011.7px;top:1004.0px;width:819.3px;height:1px;background:#e2e2e2;"></div>
<div class="r" style="left:997px;top:1004.0px;width:14.7px;height:1px;background:#d0d0d0;"></div>
<div class="t" style="left:997px;top:994.05px;width:14.7px;text-align:center;font-size:8.5px;line-height:10px;color:#555;">6</div>
<div class="r" style="left:1011.7px;top:1016.45px;width:819.3px;height:1px;background:#e2e2e2;"></div>
<div class="r" style="left:997px;top:1016.45px;width:14.7px;height:1px;background:#d0d0d0;"></div>
<div class="t" style="left:997px;top:1006.5px;width:14.7px;text-align:center;font-size:8.5px;line-height:10px;color:#555;">7</div>
<div class="r" style="left:1011.7px;top:1028.8999999999999px;width:819.3px;height:1px;background:#e2e2e2;"></div>
<div class="r" style="left:997px;top:1028.8999999999999px;width:14.7px;height:1px;background:#d0d0d0;"></div>
<div class="t" style="left:997px;top:1018.9499999999999px;width:14.7px;text-align:center;font-size:8.5px;line-height:10px;color:#555;">8</div>
<div class="r" style="left:1011.7px;top:1041.35px;width:819.3px;height:1px;background:#e2e2e2;"></div>
<div class="r" style="left:997px;top:1041.35px;width:14.7px;height:1px;background:#d0d0d0;"></div>
<div class="t" style="left:997px;top:1031.3999999999999px;width:14.7px;text-align:center;font-size:8.5px;line-height:10px;color:#555;">9</div>
<div class="r" style="left:1011.7px;top:1053.8px;width:819.3px;height:1px;background:#e2e2e2;"></div>
<div class="r" style="left:997px;top:1053.8px;width:14.7px;height:1px;background:#d0d0d0;"></div>
<div class="t" style="left:997px;top:1043.85px;width:14.7px;text-align:center;font-size:8.5px;line-height:10px;color:#555;">10</div>
<div class="r" style="left:1011.7px;top:1066.25px;width:819.3px;height:1px;background:#e2e2e2;"></div>
<div class="r" style="left:997px;top:1066.25px;width:14.7px;height:1px;background:#d0d0d0;"></div>
<div class="t" style="left:997px;top:1056.3px;width:14.7px;text-align:center;font-size:8.5px;line-height:10px;color:#555;">11</div>
<div class="r" style="left:997px;top:1078.7px;width:14.7px;height:1px;background:#d0d0d0;"></div>
<div class="t" style="left:997px;top:1068.75px;width:14.7px;text-align:center;font-size:8.5px;line-height:10px;color:#555;">12</div>
<div class="r" style="left:1280.5px;top:930.3px;width:2px;height:10.95px;background:#fff;"></div>
<div class="r" style="left:1796.1px;top:942.75px;width:2px;height:10.95px;background:#fff;"></div>
<div class="t" style="left:1011.7px;top:932.60px;width:68.79999999999995px;box-sizing:border-box;padding-left:1.5px;overflow:hidden;text-align:left;font-size:8.5px;line-height:8.5px;color:#2c2c2c;">Statement Id: 11</div>
<div class="t" style="left:1080.5px;top:932.60px;width:40.09999999999991px;box-sizing:border-box;padding-left:1.5px;overflow:hidden;text-align:left;font-size:8.5px;line-height:8.5px;color:#2c2c2c;">Statement Date: 11/13/2021</div>
<div class="t" style="left:1120.6px;top:932.60px;width:101.40000000000009px;box-sizing:border-box;padding-left:1.5px;overflow:hidden;text-align:left;font-size:8.5px;line-height:8.5px;color:#2c2c2c;">Start Date: 10/27/2021</div>
<div class="t" style="left:1222px;top:932.60px;width:99px;box-sizing:border-box;padding-left:1.5px;overflow:hidden;text-align:left;font-size:8.5px;line-height:8.5px;color:#2c2c2c;">End Date: 10/27/2021</div>
<div class="t" style="left:1011.7px;top:945.05px;width:68.79999999999995px;box-sizing:border-box;padding-left:1.5px;overflow:hidden;text-align:left;font-size:8.5px;line-height:8.5px;color:#2c2c2c;">Order Date</div>
<div class="t" style="left:1080.5px;top:945.05px;width:40.09999999999991px;box-sizing:border-box;padding-left:1.5px;overflow:hidden;text-align:left;font-size:8.5px;line-height:8.5px;color:#2c2c2c;">Shift</div>
<div class="t" style="left:1120.6px;top:945.05px;width:101.40000000000009px;box-sizing:border-box;padding-left:1.5px;overflow:hidden;text-align:left;font-size:8.5px;line-height:8.5px;color:#2c2c2c;">Customer</div>
<div class="t" style="left:1222px;top:945.05px;width:59.5px;box-sizing:border-box;padding-left:1.5px;overflow:hidden;text-align:left;font-size:8.5px;line-height:8.5px;color:#2c2c2c;">Product / Service</div>
<div class="t" style="left:1281.5px;top:945.05px;width:39.5px;box-sizing:border-box;padding-left:1.5px;overflow:hidden;text-align:left;font-size:8.5px;line-height:8.5px;color:#2c2c2c;">Ticket #</div>
<div class="t" style="left:1321px;top:945.05px;width:40.299999999999955px;box-sizing:border-box;padding-left:1.5px;overflow:hidden;text-align:left;font-size:8.5px;line-height:8.5px;color:#2c2c2c;">Ticket Date</div>
<div class="t" style="left:1361.3px;top:945.05px;width:39.700000000000045px;box-sizing:border-box;padding-left:1.5px;overflow:hidden;text-align:left;font-size:8.5px;line-height:8.5px;color:#2c2c2c;">Carrier</div>
<div class="t" style="left:1401px;top:945.05px;width:39.59999999999991px;box-sizing:border-box;padding-left:1.5px;overflow:hidden;text-align:left;font-size:8.5px;line-height:8.5px;color:#2c2c2c;">Truck</div>
<div class="t" style="left:1440.6px;top:945.05px;width:40.0px;box-sizing:border-box;padding-left:1.5px;overflow:hidden;text-align:left;font-size:8.5px;line-height:8.5px;color:#2c2c2c;">Driver</div>
<div class="t" style="left:1480.6px;top:945.05px;width:40.0px;box-sizing:border-box;padding-left:1.5px;overflow:hidden;text-align:left;font-size:8.5px;line-height:8.5px;color:#2c2c2c;">Load At</div>
<div class="t" style="left:1520.6px;top:945.05px;width:40.0px;box-sizing:border-box;padding-left:1.5px;overflow:hidden;text-align:left;font-size:8.5px;line-height:8.5px;color:#2c2c2c;">Deliver To</div>
<div class="t" style="left:1560.6px;top:945.05px;width:39.600000000000136px;box-sizing:border-box;padding-left:1.5px;overflow:hidden;text-align:left;font-size:8.5px;line-height:8.5px;color:#2c2c2c;">UOM</div>
<div class="t" style="left:1600.2px;top:945.05px;width:40.0px;box-sizing:border-box;padding-left:1.5px;overflow:hidden;text-align:left;font-size:8.5px;line-height:8.5px;color:#2c2c2c;">Quantity</div>
<div class="t" style="left:1640.2px;top:945.05px;width:40.0px;box-sizing:border-box;padding-left:1.5px;overflow:hidden;text-align:left;font-size:8.5px;line-height:8.5px;color:#2c2c2c;">Rate</div>
<div class="t" style="left:1680.2px;top:945.05px;width:55.299999999999955px;box-sizing:border-box;padding-left:1.5px;overflow:hidden;text-align:left;font-size:8.5px;line-height:8.5px;color:#2c2c2c;">BrokerFee</div>
<div class="t" style="left:1735.5px;top:945.05px;width:95.5px;box-sizing:border-box;padding-left:1.5px;overflow:hidden;text-align:left;font-size:8.5px;line-height:8.5px;color:#2c2c2c;">ExtendedAmount</div>
<div class="t" style="left:1011.7px;top:957.50px;width:68.79999999999995px;box-sizing:border-box;padding-left:1.5px;overflow:hidden;text-align:left;font-size:8.5px;line-height:8.5px;color:#2c2c2c;">10/27/2021</div>
<div class="t" style="left:1080.5px;top:957.50px;width:40.09999999999991px;box-sizing:border-box;padding-left:1.5px;overflow:hidden;text-align:left;font-size:8.5px;line-height:8.5px;color:#2c2c2c;">Day</div>
<div class="t" style="left:1120.6px;top:957.50px;width:101.40000000000009px;box-sizing:border-box;padding-left:1.5px;overflow:hidden;text-align:left;font-size:8.5px;line-height:8.5px;color:#2c2c2c;">ABC Construction</div>
<div class="t" style="left:1222px;top:957.50px;width:59.5px;box-sizing:border-box;padding-left:1.5px;overflow:hidden;text-align:left;font-size:8.5px;line-height:8.5px;color:#2c2c2c;">Rental- Tri Axle</div>
<div class="t" style="left:1281.5px;top:957.50px;width:39.5px;box-sizing:border-box;padding-right:2px;overflow:hidden;text-align:right;font-size:8.5px;line-height:8.5px;color:#2c2c2c;">14332</div>
<div class="t" style="left:1321px;top:957.50px;width:40.299999999999955px;box-sizing:border-box;padding-left:1.5px;overflow:hidden;text-align:left;font-size:8.5px;line-height:8.5px;color:#2c2c2c;">10/27/2021</div>
<div class="t" style="left:1361.3px;top:957.50px;width:39.700000000000045px;box-sizing:border-box;padding-left:1.5px;overflow:hidden;text-align:left;font-size:8.5px;line-height:8.5px;color:#2c2c2c;">ABC Hauling</div>
<div class="t" style="left:1401px;top:957.50px;width:39.59999999999991px;box-sizing:border-box;padding-left:1.5px;overflow:hidden;text-align:left;font-size:8.5px;line-height:8.5px;color:#2c2c2c;">ABC111</div>
<div class="t" style="left:1440.6px;top:957.50px;width:40.0px;box-sizing:border-box;padding-left:1.5px;overflow:hidden;text-align:left;font-size:8.5px;line-height:8.5px;color:#2c2c2c;">Barbara Simpson</div>
<div class="t" style="left:1480.6px;top:957.50px;width:40.0px;box-sizing:border-box;padding-left:1.5px;overflow:hidden;text-align:left;font-size:8.5px;line-height:8.5px;color:#2c2c2c;">Vulcan Materials</div>
<div class="t" style="left:1520.6px;top:957.50px;width:40.0px;box-sizing:border-box;padding-left:1.5px;overflow:hidden;text-align:left;font-size:8.5px;line-height:8.5px;color:#2c2c2c;">Aggregate</div>
<div class="t" style="left:1560.6px;top:957.50px;width:39.600000000000136px;box-sizing:border-box;padding-left:1.5px;overflow:hidden;text-align:left;font-size:8.5px;line-height:8.5px;color:#2c2c2c;">Hours</div>
<div class="t" style="left:1600.2px;top:957.50px;width:40.0px;box-sizing:border-box;padding-right:2px;overflow:hidden;text-align:right;font-size:8.5px;line-height:8.5px;color:#2c2c2c;">10.1</div>
<div class="t" style="left:1640.2px;top:957.50px;width:40.0px;box-sizing:border-box;padding-right:2px;overflow:hidden;text-align:right;font-size:8.5px;line-height:8.5px;color:#2c2c2c;">100</div>
<div class="t" style="left:1680.2px;top:957.50px;width:55.299999999999955px;box-sizing:border-box;padding-right:2px;overflow:hidden;text-align:right;font-size:8.5px;line-height:8.5px;color:#2c2c2c;">50.5</div>
<div class="t" style="left:1735.5px;top:957.50px;width:61.59999999999991px;box-sizing:border-box;padding-right:2px;overflow:hidden;text-align:right;font-size:8.5px;line-height:8.5px;color:#2c2c2c;">959.5</div>
<div class="t" style="left:1011.7px;top:969.95px;width:68.79999999999995px;box-sizing:border-box;padding-left:1.5px;overflow:hidden;text-align:left;font-size:8.5px;line-height:8.5px;color:#2c2c2c;">10/27/2021</div>
<div class="t" style="left:1080.5px;top:969.95px;width:40.09999999999991px;box-sizing:border-box;padding-left:1.5px;overflow:hidden;text-align:left;font-size:8.5px;line-height:8.5px;color:#2c2c2c;">Day</div>
<div class="t" style="left:1120.6px;top:969.95px;width:101.40000000000009px;box-sizing:border-box;padding-left:1.5px;overflow:hidden;text-align:left;font-size:8.5px;line-height:8.5px;color:#2c2c2c;">ABC Construction</div>
<div class="t" style="left:1222px;top:969.95px;width:59.5px;box-sizing:border-box;padding-left:1.5px;overflow:hidden;text-align:left;font-size:8.5px;line-height:8.5px;color:#2c2c2c;">Rental- Tri Axle</div>
<div class="t" style="left:1281.5px;top:969.95px;width:39.5px;box-sizing:border-box;padding-right:2px;overflow:hidden;text-align:right;font-size:8.5px;line-height:8.5px;color:#2c2c2c;">6525</div>
<div class="t" style="left:1321px;top:969.95px;width:40.299999999999955px;box-sizing:border-box;padding-left:1.5px;overflow:hidden;text-align:left;font-size:8.5px;line-height:8.5px;color:#2c2c2c;">10/27/2021</div>
<div class="t" style="left:1361.3px;top:969.95px;width:39.700000000000045px;box-sizing:border-box;padding-left:1.5px;overflow:hidden;text-align:left;font-size:8.5px;line-height:8.5px;color:#2c2c2c;">ABC Hauling</div>
<div class="t" style="left:1401px;top:969.95px;width:39.59999999999991px;box-sizing:border-box;padding-left:1.5px;overflow:hidden;text-align:left;font-size:8.5px;line-height:8.5px;color:#2c2c2c;">ABC112</div>
<div class="t" style="left:1440.6px;top:969.95px;width:40.0px;box-sizing:border-box;padding-left:1.5px;overflow:hidden;text-align:left;font-size:8.5px;line-height:8.5px;color:#2c2c2c;">John Smith</div>
<div class="t" style="left:1480.6px;top:969.95px;width:40.0px;box-sizing:border-box;padding-left:1.5px;overflow:hidden;text-align:left;font-size:8.5px;line-height:8.5px;color:#2c2c2c;">Vulcan Materials</div>
<div class="t" style="left:1520.6px;top:969.95px;width:40.0px;box-sizing:border-box;padding-left:1.5px;overflow:hidden;text-align:left;font-size:8.5px;line-height:8.5px;color:#2c2c2c;">Aggregate</div>
<div class="t" style="left:1560.6px;top:969.95px;width:39.600000000000136px;box-sizing:border-box;padding-left:1.5px;overflow:hidden;text-align:left;font-size:8.5px;line-height:8.5px;color:#2c2c2c;">Hours</div>
<div class="t" style="left:1600.2px;top:969.95px;width:40.0px;box-sizing:border-box;padding-right:2px;overflow:hidden;text-align:right;font-size:8.5px;line-height:8.5px;color:#2c2c2c;">9.5</div>
<div class="t" style="left:1640.2px;top:969.95px;width:40.0px;box-sizing:border-box;padding-right:2px;overflow:hidden;text-align:right;font-size:8.5px;line-height:8.5px;color:#2c2c2c;">100</div>
<div class="t" style="left:1680.2px;top:969.95px;width:55.299999999999955px;box-sizing:border-box;padding-right:2px;overflow:hidden;text-align:right;font-size:8.5px;line-height:8.5px;color:#2c2c2c;">47.5</div>
<div class="t" style="left:1735.5px;top:969.95px;width:61.59999999999991px;box-sizing:border-box;padding-right:2px;overflow:hidden;text-align:right;font-size:8.5px;line-height:8.5px;color:#2c2c2c;">902.5</div>
<div class="t" style="left:1011.7px;top:982.40px;width:68.79999999999995px;box-sizing:border-box;padding-left:1.5px;overflow:hidden;text-align:left;font-size:8.5px;line-height:8.5px;color:#2c2c2c;">10/27/2021</div>
<div class="t" style="left:1080.5px;top:982.40px;width:40.09999999999991px;box-sizing:border-box;padding-left:1.5px;overflow:hidden;text-align:left;font-size:8.5px;line-height:8.5px;color:#2c2c2c;">Day</div>
<div class="t" style="left:1120.6px;top:982.40px;width:101.40000000000009px;box-sizing:border-box;padding-left:1.5px;overflow:hidden;text-align:left;font-size:8.5px;line-height:8.5px;color:#2c2c2c;">ABC Construction</div>
<div class="t" style="left:1222px;top:982.40px;width:59.5px;box-sizing:border-box;padding-left:1.5px;overflow:hidden;text-align:left;font-size:8.5px;line-height:8.5px;color:#2c2c2c;">#1 Stone</div>
<div class="t" style="left:1281.5px;top:982.40px;width:39.5px;box-sizing:border-box;padding-right:2px;overflow:hidden;text-align:right;font-size:8.5px;line-height:8.5px;color:#2c2c2c;">265345</div>
<div class="t" style="left:1321px;top:982.40px;width:40.299999999999955px;box-sizing:border-box;padding-left:1.5px;overflow:hidden;text-align:left;font-size:8.5px;line-height:8.5px;color:#2c2c2c;">10/27/2021</div>
<div class="t" style="left:1361.3px;top:982.40px;width:39.700000000000045px;box-sizing:border-box;padding-left:1.5px;overflow:hidden;text-align:left;font-size:8.5px;line-height:8.5px;color:#2c2c2c;">ABC Hauling</div>
<div class="t" style="left:1401px;top:982.40px;width:39.59999999999991px;box-sizing:border-box;padding-left:1.5px;overflow:hidden;text-align:left;font-size:8.5px;line-height:8.5px;color:#2c2c2c;">ABC112</div>
<div class="t" style="left:1440.6px;top:982.40px;width:40.0px;box-sizing:border-box;padding-left:1.5px;overflow:hidden;text-align:left;font-size:8.5px;line-height:8.5px;color:#2c2c2c;">Jeffrey Doe</div>
<div class="t" style="left:1480.6px;top:982.40px;width:40.0px;box-sizing:border-box;padding-left:1.5px;overflow:hidden;text-align:left;font-size:8.5px;line-height:8.5px;color:#2c2c2c;">Vulcan Materials</div>
<div class="t" style="left:1520.6px;top:982.40px;width:40.0px;box-sizing:border-box;padding-left:1.5px;overflow:hidden;text-align:left;font-size:8.5px;line-height:8.5px;color:#2c2c2c;">123 Main St</div>
<div class="t" style="left:1560.6px;top:982.40px;width:39.600000000000136px;box-sizing:border-box;padding-left:1.5px;overflow:hidden;text-align:left;font-size:8.5px;line-height:8.5px;color:#2c2c2c;">Loads</div>
<div class="t" style="left:1600.2px;top:982.40px;width:40.0px;box-sizing:border-box;padding-right:2px;overflow:hidden;text-align:right;font-size:8.5px;line-height:8.5px;color:#2c2c2c;">1</div>
<div class="t" style="left:1640.2px;top:982.40px;width:40.0px;box-sizing:border-box;padding-right:2px;overflow:hidden;text-align:right;font-size:8.5px;line-height:8.5px;color:#2c2c2c;">90</div>
<div class="t" style="left:1680.2px;top:982.40px;width:55.299999999999955px;box-sizing:border-box;padding-right:2px;overflow:hidden;text-align:right;font-size:8.5px;line-height:8.5px;color:#2c2c2c;">4.5</div>
<div class="t" style="left:1735.5px;top:982.40px;width:61.59999999999991px;box-sizing:border-box;padding-right:2px;overflow:hidden;text-align:right;font-size:8.5px;line-height:8.5px;color:#2c2c2c;">85.5</div>
<div class="t" style="left:1011.7px;top:994.85px;width:68.79999999999995px;box-sizing:border-box;padding-left:1.5px;overflow:hidden;text-align:left;font-size:8.5px;line-height:8.5px;color:#2c2c2c;">10/27/2021</div>
<div class="t" style="left:1080.5px;top:994.85px;width:40.09999999999991px;box-sizing:border-box;padding-left:1.5px;overflow:hidden;text-align:left;font-size:8.5px;line-height:8.5px;color:#2c2c2c;">Day</div>
<div class="t" style="left:1120.6px;top:994.85px;width:101.40000000000009px;box-sizing:border-box;padding-left:1.5px;overflow:hidden;text-align:left;font-size:8.5px;line-height:8.5px;color:#2c2c2c;">ABC Construction</div>
<div class="t" style="left:1222px;top:994.85px;width:59.5px;box-sizing:border-box;padding-left:1.5px;overflow:hidden;text-align:left;font-size:8.5px;line-height:8.5px;color:#2c2c2c;">Rental- Tri Axle</div>
<div class="t" style="left:1281.5px;top:994.85px;width:39.5px;box-sizing:border-box;padding-right:2px;overflow:hidden;text-align:right;font-size:8.5px;line-height:8.5px;color:#2c2c2c;">23656</div>
<div class="t" style="left:1321px;top:994.85px;width:40.299999999999955px;box-sizing:border-box;padding-left:1.5px;overflow:hidden;text-align:left;font-size:8.5px;line-height:8.5px;color:#2c2c2c;">10/27/2021</div>
<div class="t" style="left:1361.3px;top:994.85px;width:39.700000000000045px;box-sizing:border-box;padding-left:1.5px;overflow:hidden;text-align:left;font-size:8.5px;line-height:8.5px;color:#2c2c2c;">Upstate Dump</div>
<div class="t" style="left:1401px;top:994.85px;width:39.59999999999991px;box-sizing:border-box;padding-left:1.5px;overflow:hidden;text-align:left;font-size:8.5px;line-height:8.5px;color:#2c2c2c;">UDT102</div>
<div class="t" style="left:1440.6px;top:994.85px;width:40.0px;box-sizing:border-box;padding-left:1.5px;overflow:hidden;text-align:left;font-size:8.5px;line-height:8.5px;color:#2c2c2c;">Fred Flintstone</div>
<div class="t" style="left:1480.6px;top:994.85px;width:40.0px;box-sizing:border-box;padding-left:1.5px;overflow:hidden;text-align:left;font-size:8.5px;line-height:8.5px;color:#2c2c2c;">Vulcan Materials</div>
<div class="t" style="left:1520.6px;top:994.85px;width:40.0px;box-sizing:border-box;padding-left:1.5px;overflow:hidden;text-align:left;font-size:8.5px;line-height:8.5px;color:#2c2c2c;">Aggregate</div>
<div class="t" style="left:1560.6px;top:994.85px;width:39.600000000000136px;box-sizing:border-box;padding-left:1.5px;overflow:hidden;text-align:left;font-size:8.5px;line-height:8.5px;color:#2c2c2c;">Hours</div>
<div class="t" style="left:1600.2px;top:994.85px;width:40.0px;box-sizing:border-box;padding-right:2px;overflow:hidden;text-align:right;font-size:8.5px;line-height:8.5px;color:#2c2c2c;">9.1</div>
<div class="t" style="left:1640.2px;top:994.85px;width:40.0px;box-sizing:border-box;padding-right:2px;overflow:hidden;text-align:right;font-size:8.5px;line-height:8.5px;color:#2c2c2c;">100</div>
<div class="t" style="left:1680.2px;top:994.85px;width:55.299999999999955px;box-sizing:border-box;padding-right:2px;overflow:hidden;text-align:right;font-size:8.5px;line-height:8.5px;color:#2c2c2c;">45.5</div>
<div class="t" style="left:1735.5px;top:994.85px;width:61.59999999999991px;box-sizing:border-box;padding-right:2px;overflow:hidden;text-align:right;font-size:8.5px;line-height:8.5px;color:#2c2c2c;">864.5</div>
<div class="t" style="left:1011.7px;top:1007.30px;width:68.79999999999995px;box-sizing:border-box;padding-left:1.5px;overflow:hidden;text-align:left;font-size:8.5px;line-height:8.5px;color:#2c2c2c;">10/27/2021</div>
<div class="t" style="left:1080.5px;top:1007.30px;width:40.09999999999991px;box-sizing:border-box;padding-left:1.5px;overflow:hidden;text-align:left;font-size:8.5px;line-height:8.5px;color:#2c2c2c;">Day</div>
<div class="t" style="left:1120.6px;top:1007.30px;width:101.40000000000009px;box-sizing:border-box;padding-left:1.5px;overflow:hidden;text-align:left;font-size:8.5px;line-height:8.5px;color:#2c2c2c;">ABC Construction</div>
<div class="t" style="left:1222px;top:1007.30px;width:59.5px;box-sizing:border-box;padding-left:1.5px;overflow:hidden;text-align:left;font-size:8.5px;line-height:8.5px;color:#2c2c2c;">Rental- Tri Axle</div>
<div class="t" style="left:1281.5px;top:1007.30px;width:39.5px;box-sizing:border-box;padding-right:2px;overflow:hidden;text-align:right;font-size:8.5px;line-height:8.5px;color:#2c2c2c;">235435</div>
<div class="t" style="left:1321px;top:1007.30px;width:40.299999999999955px;box-sizing:border-box;padding-left:1.5px;overflow:hidden;text-align:left;font-size:8.5px;line-height:8.5px;color:#2c2c2c;">10/27/2021</div>
<div class="t" style="left:1361.3px;top:1007.30px;width:39.700000000000045px;box-sizing:border-box;padding-left:1.5px;overflow:hidden;text-align:left;font-size:8.5px;line-height:8.5px;color:#2c2c2c;">Upstate Dump</div>
<div class="t" style="left:1401px;top:1007.30px;width:39.59999999999991px;box-sizing:border-box;padding-left:1.5px;overflow:hidden;text-align:left;font-size:8.5px;line-height:8.5px;color:#2c2c2c;">UDT100</div>
<div class="t" style="left:1440.6px;top:1007.30px;width:40.0px;box-sizing:border-box;padding-left:1.5px;overflow:hidden;text-align:left;font-size:8.5px;line-height:8.5px;color:#2c2c2c;">Barney Rubble</div>
<div class="t" style="left:1480.6px;top:1007.30px;width:40.0px;box-sizing:border-box;padding-left:1.5px;overflow:hidden;text-align:left;font-size:8.5px;line-height:8.5px;color:#2c2c2c;">Vulcan Materials</div>
<div class="t" style="left:1520.6px;top:1007.30px;width:40.0px;box-sizing:border-box;padding-left:1.5px;overflow:hidden;text-align:left;font-size:8.5px;line-height:8.5px;color:#2c2c2c;">Aggregate</div>
<div class="t" style="left:1560.6px;top:1007.30px;width:39.600000000000136px;box-sizing:border-box;padding-left:1.5px;overflow:hidden;text-align:left;font-size:8.5px;line-height:8.5px;color:#2c2c2c;">Hours</div>
<div class="t" style="left:1600.2px;top:1007.30px;width:40.0px;box-sizing:border-box;padding-right:2px;overflow:hidden;text-align:right;font-size:8.5px;line-height:8.5px;color:#2c2c2c;">8.5</div>
<div class="t" style="left:1640.2px;top:1007.30px;width:40.0px;box-sizing:border-box;padding-right:2px;overflow:hidden;text-align:right;font-size:8.5px;line-height:8.5px;color:#2c2c2c;">100</div>
<div class="t" style="left:1680.2px;top:1007.30px;width:55.299999999999955px;box-sizing:border-box;padding-right:2px;overflow:hidden;text-align:right;font-size:8.5px;line-height:8.5px;color:#2c2c2c;">42.5</div>
<div class="t" style="left:1735.5px;top:1007.30px;width:61.59999999999991px;box-sizing:border-box;padding-right:2px;overflow:hidden;text-align:right;font-size:8.5px;line-height:8.5px;color:#2c2c2c;">807.5</div>
</div>
<div class="r" style="left:994px;top:515px;width:840px;height:563px;border:3px solid #8c8c8c;"></div>
</body></html>
